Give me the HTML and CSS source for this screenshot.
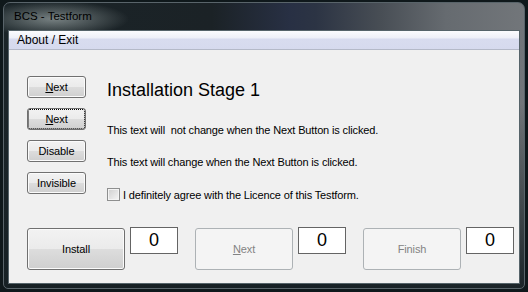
FILE: index.html
```html
<!DOCTYPE html>
<html lang="en">
<head>
  <meta charset="UTF-8" />
  <meta name="viewport" content="width=device-width, initial-scale=1.0"/>
  <title>BCS - Testform</title>
  <link rel="stylesheet" href="styles.css">
</head>
<body>
  <div class="window">
    <div class="titlebar">BCS - Testform</div>
    <div class="client">
      <div class="menubar"><span class="menuitem">About / Exit</span></div>
      <div class="content">
        <div class="stage">
          <div class="side">
            <button class="btn"><u>N</u>ext</button>
            <button class="btn focus"><u>N</u>ext</button>
            <button class="btn">Disable</button>
            <button class="btn">Invisible</button>
          </div>
          <div class="info">
            <h1>Installation Stage 1</h1>
            <p>This text will&nbsp; not change when the Next Button is clicked.</p>
            <p>This text will change when the Next Button is clicked.</p>
            <label class="check"><span class="box"></span>I definitely agree with the Licence of this Testform.</label>
          </div>
        </div>
        <div class="actions">
          <button class="btn big">Install</button>
          <div class="count">0</div>
          <button class="btn big" disabled><u>N</u>ext</button>
          <div class="count">0</div>
          <button class="btn big" disabled>Finish</button>
          <div class="count">0</div>
        </div>
      </div>
    </div>
  </div>
</body>
</html>
```

FILE: styles.css
```css
body {
  margin: 0;
  background: #0f181b;
  font-family: "Liberation Sans", Arial, sans-serif;
}
.window {
  box-sizing: border-box;
  width: 522px;
  height: 287px;
  margin: 2px 0 0 3px;
  padding: 0 4px 4px 4px;
  border: 1px solid #59646a;
  border-radius: 7px 7px 5px 5px;
  display: flex;
  flex-direction: column;
  background:
    linear-gradient(to bottom, rgba(22,32,36,0) 35%, rgba(22,32,36,0.95) 100%),
    radial-gradient(ellipse 75px 18px at 50px 16px, rgba(150,160,160,0.75), rgba(150,160,160,0)),
    linear-gradient(to right, #1a2428 0%, #1b2226 40%, #283044 55%, #2c3444 60%, #474d54 72%, #666b70 85%, #72767a 100%);
}
.titlebar {
  height: 27px;
  line-height: 27px;
  padding-left: 6px;
  font-size: 11.5px;
  color: #000;
}
.client {
  flex: 1;
  display: flex;
  flex-direction: column;
  border: 1px solid #56646a;
  background: #f0f0f0;
}
.menubar {
  height: 18px;
  line-height: 18px;
  border-bottom: 1px solid #b4b9c8;
  background: linear-gradient(to bottom, #fbfcfe 0%, #eef0f8 38%, #d8dcef 45%, #d6daee 100%);
  font-size: 12px;
  padding-left: 8px;
}
.content {
  flex: 1;
  display: flex;
  flex-direction: column;
  padding: 26px 0 13px 18px;
}
.stage {
  display: flex;
  gap: 21px;
}
.side {
  display: flex;
  flex-direction: column;
  gap: 10px;
}
.btn {
  box-sizing: border-box;
  flex-shrink: 0;
  width: 59px;
  height: 22px;
  padding: 0;
  border: 1px solid #707070;
  border-radius: 3px;
  font-family: "Liberation Sans", Arial, sans-serif;
  font-size: 11px;
  letter-spacing: -0.1px;
  color: #000;
  box-shadow: inset 0 0 0 1px #fbfbfb;
  background: linear-gradient(to bottom, #f2f2f2 0%, #ebebeb 49%, #dddddd 50%, #cfcfcf 100%);
}
.btn.focus {
  outline: 1px dotted #000;
  outline-offset: -2px;
}
.btn.big {
  width: 98px;
  height: 42px;
}
.btn:disabled {
  border-color: #adb2b5;
  background: #f4f4f4;
  box-shadow: none;
  color: #838383;
}
.info h1 {
  margin: 3px 0 0 0;
  font-size: 18px;
  font-weight: normal;
  line-height: 22px;
}
.info p {
  margin: 0;
  font-size: 11px;
  line-height: 14px;
  letter-spacing: -0.14px;
}
.info h1 + p {
  margin-top: 22px;
}
.info p + p {
  margin-top: 18px;
}
.check {
  display: flex;
  align-items: center;
  gap: 3px;
  margin-top: 19px;
  font-size: 11px;
  letter-spacing: -0.14px;
}
.box {
  box-sizing: border-box;
  width: 13px;
  height: 13px;
  border: 1px solid #8e8f8f;
  box-shadow: inset 0 0 0 1px #f4f4f4;
  background: linear-gradient(135deg, #cfcfcf, #f6f6f6);
}
.actions {
  margin-top: auto;
  display: flex;
  align-items: flex-start;
}
.count {
  box-sizing: border-box;
  flex-shrink: 0;
  width: 48px;
  height: 27px;
  margin: -1px 17px 0 5px;
  border: 1px solid #646464;
  background: #fff;
  font-size: 18px;
  line-height: 25px;
  text-align: center;
}
.count:last-child {
  margin-right: 0;
}
```
